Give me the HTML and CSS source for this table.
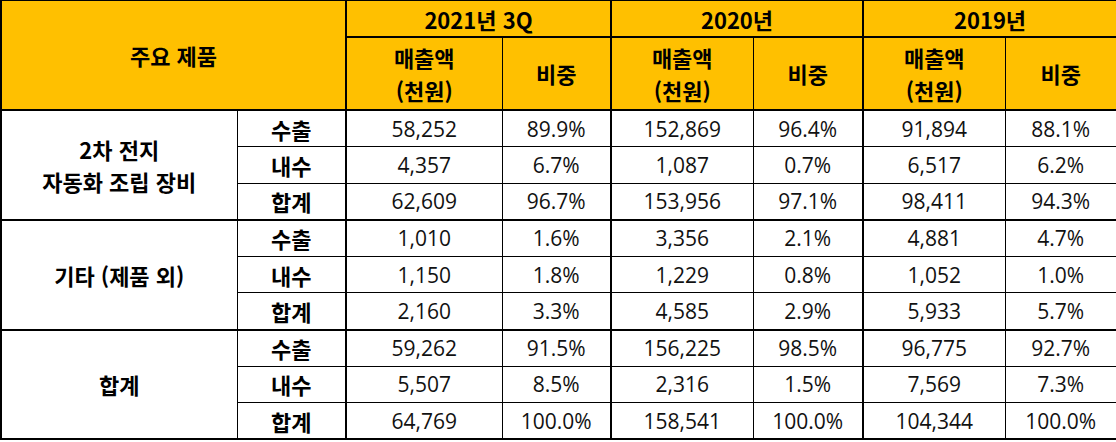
FILE: index.html
```html
<!DOCTYPE html>
<html lang="ko">
<head>
<meta charset="utf-8">
<link rel="stylesheet" href="styles.css">
</head>
<body>
<table class="t">
  <colgroup>
    <col class="w1"><col class="w2"><col class="w3"><col class="w4"><col class="w5"><col class="w6"><col class="w7"><col class="w8">
  </colgroup>
  <thead>
    <tr class="r-year">
      <th class="h cat" rowspan="2" colspan="2">주요 제품</th>
      <th class="h yr" colspan="2">2021년 3Q</th>
      <th class="h yr" colspan="2">2020년</th>
      <th class="h yr" colspan="2">2019년</th>
    </tr>
    <tr class="r-sub">
      <th class="h sub amt">매출액<br>(천원)</th>
      <th class="h sub pct">비중</th>
      <th class="h sub amt">매출액<br>(천원)</th>
      <th class="h sub pct">비중</th>
      <th class="h sub amt">매출액<br>(천원)</th>
      <th class="h sub pct">비중</th>
    </tr>
  </thead>
  <tbody class="grp">
    <tr>
      <th class="grpname two" rowspan="3">2차 전지<br>자동화 조립 장비</th>
      <th class="lbl">수출</th>
      <td class="amt">58,252</td><td class="pct">89.9%</td>
      <td class="amt">152,869</td><td class="pct">96.4%</td>
      <td class="amt">91,894</td><td class="pct">88.1%</td>
    </tr>
    <tr>
      <th class="lbl">내수</th>
      <td class="amt">4,357</td><td class="pct">6.7%</td>
      <td class="amt">1,087</td><td class="pct">0.7%</td>
      <td class="amt">6,517</td><td class="pct">6.2%</td>
    </tr>
    <tr class="last">
      <th class="lbl">합계</th>
      <td class="amt">62,609</td><td class="pct">96.7%</td>
      <td class="amt">153,956</td><td class="pct">97.1%</td>
      <td class="amt">98,411</td><td class="pct">94.3%</td>
    </tr>
  </tbody>
  <tbody class="grp">
    <tr>
      <th class="grpname" rowspan="3">기타 (제품 외)</th>
      <th class="lbl">수출</th>
      <td class="amt">1,010</td><td class="pct">1.6%</td>
      <td class="amt">3,356</td><td class="pct">2.1%</td>
      <td class="amt">4,881</td><td class="pct">4.7%</td>
    </tr>
    <tr>
      <th class="lbl">내수</th>
      <td class="amt">1,150</td><td class="pct">1.8%</td>
      <td class="amt">1,229</td><td class="pct">0.8%</td>
      <td class="amt">1,052</td><td class="pct">1.0%</td>
    </tr>
    <tr class="last">
      <th class="lbl">합계</th>
      <td class="amt">2,160</td><td class="pct">3.3%</td>
      <td class="amt">4,585</td><td class="pct">2.9%</td>
      <td class="amt">5,933</td><td class="pct">5.7%</td>
    </tr>
  </tbody>
  <tbody class="grp">
    <tr>
      <th class="grpname" rowspan="3">합계</th>
      <th class="lbl">수출</th>
      <td class="amt">59,262</td><td class="pct">91.5%</td>
      <td class="amt">156,225</td><td class="pct">98.5%</td>
      <td class="amt">96,775</td><td class="pct">92.7%</td>
    </tr>
    <tr>
      <th class="lbl">내수</th>
      <td class="amt">5,507</td><td class="pct">8.5%</td>
      <td class="amt">2,316</td><td class="pct">1.5%</td>
      <td class="amt">7,569</td><td class="pct">7.3%</td>
    </tr>
    <tr class="last">
      <th class="lbl">합계</th>
      <td class="amt">64,769</td><td class="pct">100.0%</td>
      <td class="amt">158,541</td><td class="pct">100.0%</td>
      <td class="amt">104,344</td><td class="pct">100.0%</td>
    </tr>
  </tbody>
</table>
</body>
</html>
```
FILE: styles.css
```css
html, body {
  margin: 0;
  padding: 0;
  background: #fff;
}
body {
  font-family: "Open Sans", "Noto Sans CJK KR", sans-serif;
  color: #000;
}
.t {
  border-collapse: collapse;
  table-layout: fixed;
  width: 1116px;
  margin-top: -1px;
  border: 2px solid #000;
  font-size: 21px;
}
.w1 { width: 236px; }
.w2 { width: 109px; }
.w3 { width: 156px; }
.w4 { width: 109px; }
.w5 { width: 142px; }
.w6 { width: 110px; }
.w7 { width: 142px; }
.w8 { width: 112px; }

th, td {
  padding: 0;
  text-align: center;
  vertical-align: middle;
  border: 1px solid #000;
  white-space: nowrap;
}
th {
  font-family: "Noto Sans CJK KR", "Open Sans", sans-serif;
  font-weight: 700;
  font-size: 22px;
}
.h {
  background: #FFC000;
  border: 2px solid #000;
}
.h.sub.pct { border-left-width: 1px; }
.h.sub.amt { border-right-width: 1px; }
.r-year { height: 37px; }
.r-sub { height: 73px; }
.sub { line-height: 33px; }
.grp tr { height: 36.6px; }
.grp { border-top: 2px solid #000; }
.grpname { border-right: 1px solid #000; line-height: 32px; }
.lbl { border-right: 2px solid #000; }
td.amt { border-left: 2px solid #000; }
td.pct { border-right: 2px solid #000; }
td {
  font-size: 21px;
  color: #111;
}
```
